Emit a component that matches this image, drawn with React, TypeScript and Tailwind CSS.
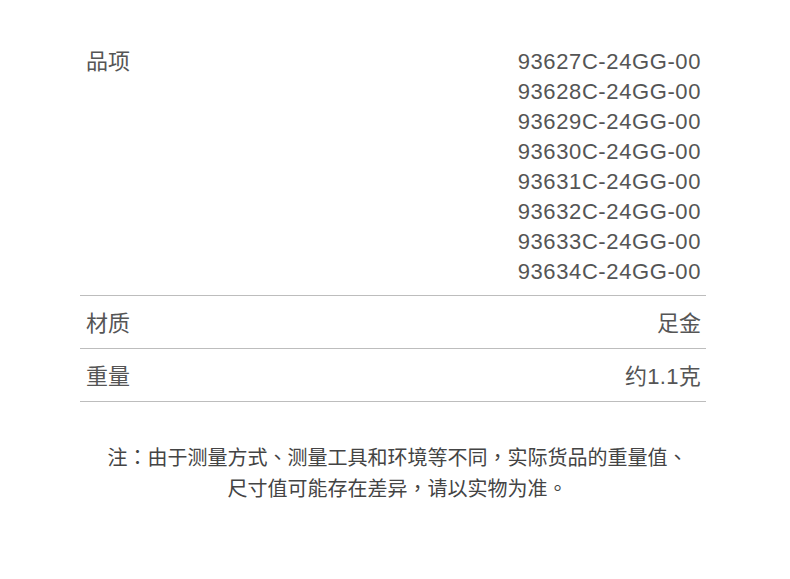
const codes = [
  "93627C-24GG-00",
  "93628C-24GG-00",
  "93629C-24GG-00",
  "93630C-24GG-00",
  "93631C-24GG-00",
  "93632C-24GG-00",
  "93633C-24GG-00",
  "93634C-24GG-00",
];

const cjk = "font-['Liberation_Sans','Noto_Sans_CJK_SC',sans-serif]";

export default function App() {
  return (
    <div className={`w-[790px] h-[579px] bg-white ${cjk} text-[#555]`}>
      <div className="ml-[80px] w-[626px] pt-[36px]">
        <div className="flex justify-between border-b border-[#bdbdbd] pt-[11px] pb-[8px]">
          <span className="pl-[6px] text-[22px] leading-[30px]">品项</span>
          <div className="flex flex-col items-end pr-[5px]">
            {codes.map((c) => (
              <span key={c} className="text-[22px] leading-[30px] tracking-[0.6px]">
                {c}
              </span>
            ))}
          </div>
        </div>
        <div className="flex justify-between items-center border-b border-[#bdbdbd] h-[53px] pt-[3px]">
          <span className="pl-[6px] text-[22px] leading-[30px]">材质</span>
          <span className="pr-[5px] text-[22px] leading-[30px]">足金</span>
        </div>
        <div className="flex justify-between items-center border-b border-[#bdbdbd] h-[53px] pt-[3px]">
          <span className="pl-[6px] text-[22px] leading-[30px]">重量</span>
          <span className="pr-[5px] text-[22px] leading-[30px] tracking-[0.3px]">约1.1克</span>
        </div>
      </div>
      <div className="mt-[41px] pl-[5px] text-center text-[20px] leading-[31px] text-[#444] font-['Liberation_Sans','Noto_Sans_CJK_TC',sans-serif]">
        <p>注：由于测量方式、测量工具和环境等不同，实际货品的重量值、</p>
        <p>尺寸值可能存在差异，请以实物为准。</p>
      </div>
    </div>
  );
}
